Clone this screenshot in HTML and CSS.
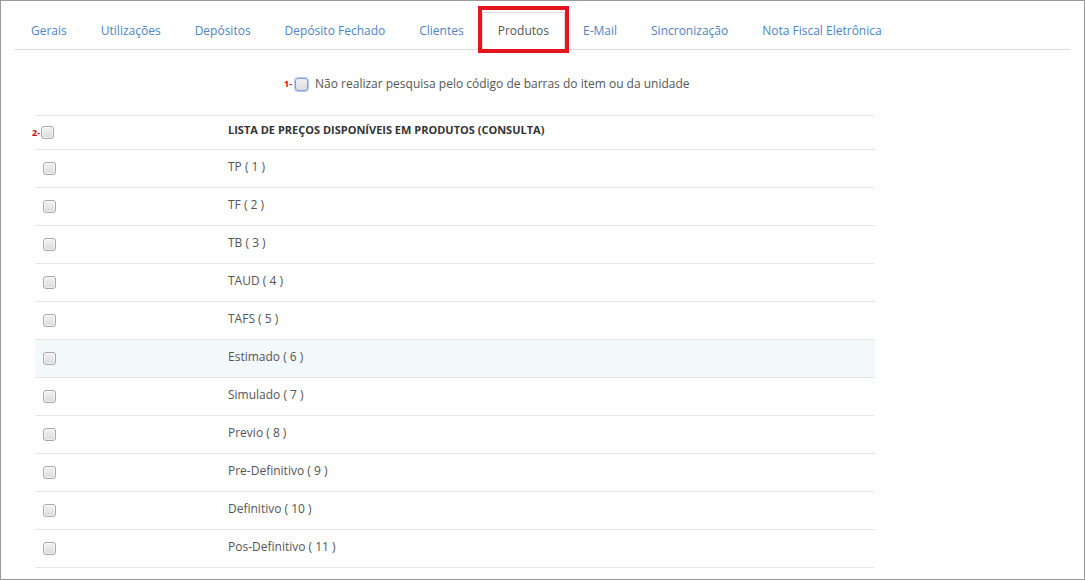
FILE: index.html
```html
<!DOCTYPE html>
<html lang="pt-BR">
<head>
<meta charset="utf-8">
<title>Produtos</title>
<link rel="stylesheet" href="styles.css">
</head>
<body>
<div class="frame">
  <ul class="tabs">
    <li><a href="#">Gerais</a></li>
    <li><a href="#">Utilizações</a></li>
    <li><a href="#">Depósitos</a></li>
    <li><a href="#">Depósito Fechado</a></li>
    <li><a href="#">Clientes</a></li>
    <li class="active"><a href="#">Produtos</a><span class="mark"></span></li>
    <li><a href="#">E-Mail</a></li>
    <li><a href="#">Sincronização</a></li>
    <li><a href="#">Nota Fiscal Eletrônica</a></li>
  </ul>

  <div class="option">
    <span class="num">1-</span>
    <input type="checkbox" class="cb cb-focus" id="opt1">
    <label for="opt1">Não realizar pesquisa pelo código de barras do item ou da unidade</label>
  </div>

  <div class="list">
    <div class="row head">
      <div class="c1"><span class="num num2">2-</span><input type="checkbox" class="cb"></div>
      <div class="c2">LISTA DE PREÇOS DISPONÍVEIS EM PRODUTOS (CONSULTA)</div>
    </div>
    <div class="row"><div class="c1"><input type="checkbox" class="cb"></div><div class="c2">TP ( 1 )</div></div>
    <div class="row"><div class="c1"><input type="checkbox" class="cb"></div><div class="c2">TF ( 2 )</div></div>
    <div class="row"><div class="c1"><input type="checkbox" class="cb"></div><div class="c2">TB ( 3 )</div></div>
    <div class="row"><div class="c1"><input type="checkbox" class="cb"></div><div class="c2">TAUD ( 4 )</div></div>
    <div class="row"><div class="c1"><input type="checkbox" class="cb"></div><div class="c2">TAFS ( 5 )</div></div>
    <div class="row hover"><div class="c1"><input type="checkbox" class="cb"></div><div class="c2">Estimado ( 6 )</div></div>
    <div class="row"><div class="c1"><input type="checkbox" class="cb"></div><div class="c2">Simulado ( 7 )</div></div>
    <div class="row"><div class="c1"><input type="checkbox" class="cb"></div><div class="c2">Previo ( 8 )</div></div>
    <div class="row"><div class="c1"><input type="checkbox" class="cb"></div><div class="c2">Pre-Definitivo ( 9 )</div></div>
    <div class="row"><div class="c1"><input type="checkbox" class="cb"></div><div class="c2">Definitivo ( 10 )</div></div>
    <div class="row last"><div class="c1"><input type="checkbox" class="cb"></div><div class="c2">Pos-Definitivo ( 11 )</div></div>
  </div>
</div>
</body>
</html>
```

FILE: styles.css
```css
* { box-sizing: border-box; }

html, body {
  margin: 0;
  padding: 0;
  background: #fff;
}

body {
  font-family: "Open Sans", "Liberation Sans", sans-serif;
  font-size: 12px;
  color: #555;
}

.frame {
  width: 1085px;
  height: 580px;
  border: 1px solid #9a9a9a;
  padding: 11px 14px 0 14px;
  overflow: hidden;
}

.tabs {
  list-style: none;
  margin: 0;
  padding: 0;
  display: flex;
  border-bottom: 1px solid #dddddd;
  height: 38px;
}

.tabs li {
  position: relative;
  margin-bottom: -1px;
  margin-right: 2px;
}

.tabs a {
  display: block;
  padding: 10px 15px;
  line-height: 16px;
  border: 1px solid transparent;
  border-bottom: 0;
  color: #4d84c4;
  text-decoration: none;
  white-space: nowrap;
  height: 38px;
}

.tabs .active a {
  color: #555;
  background: #fff;
  border-color: #dddddd;
}

.tabs .mark {
  position: absolute;
  left: -4px;
  right: -4px;
  top: -6px;
  bottom: -3px;
  border: 4px solid #e6141d;
  pointer-events: none;
}

.option {
  display: flex;
  align-items: center;
  margin-top: 24px;
  padding-left: 269px;
  height: 20px;
  line-height: 20px;
}

.num {
  color: #e00000;
  font-weight: bold;
  font-size: 9px;
  margin-right: 3px;
}

.option label {
  margin-left: 7px;
  color: #555;
}

.cb {
  -webkit-appearance: none;
  appearance: none;
  width: 13px;
  height: 13px;
  margin: 0;
  border: 1px solid #a9a9a9;
  border-radius: 3px;
  background: linear-gradient(#f2f2f2, #dcdcdc);
  box-shadow: inset 0 0 0 1px rgba(255,255,255,0.6);
  flex: none;
}

.cb-focus {
  border-color: #7f9fd6;
  box-shadow: 0 0 0 1px #b9cbee;
}

.list {
  margin: 21px 0 0 20px;
  width: 840px;
  border-bottom: 1px solid #e6e6e6;
}

.row {
  display: grid;
  grid-template-columns: 185px 1fr;
  align-items: center;
  height: 38px;
  border-top: 1px solid #e6e6e6;
  color: #555;
}

.row.head {
  height: 34px;
  font-size: 11px;
  font-weight: bold;
  color: #333;
}

.row.head .c2 {
  padding-bottom: 6px;
}

.row.hover {
  background: #f3f8fb;
}

.c1 {
  display: flex;
  align-items: center;
  padding-left: 8px;
}

.c2 {
  padding-left: 8px;
  padding-bottom: 4px;
}

.num2 {
  margin-left: -11px;
  margin-right: 1px;
}
```
